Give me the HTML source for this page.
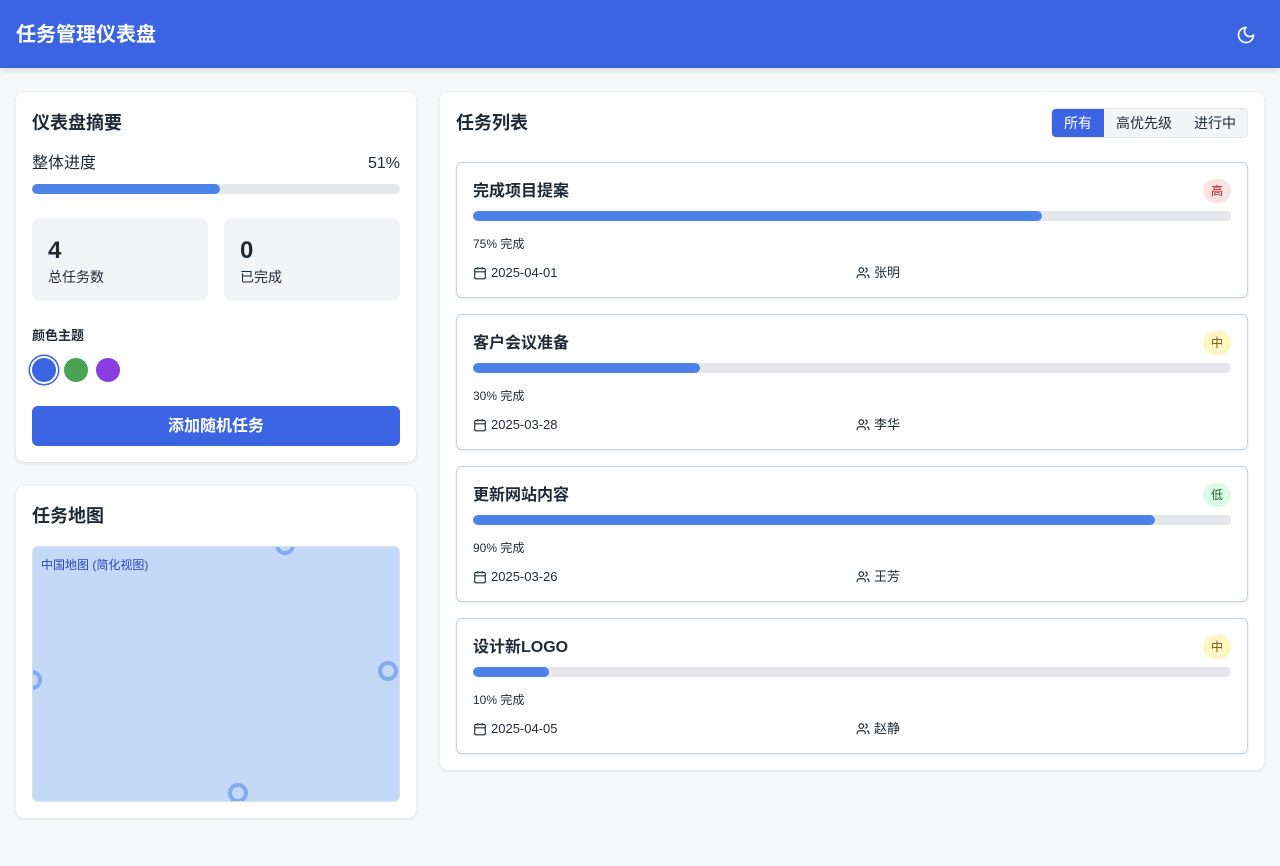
<!DOCTYPE html>
<html><head><meta charset="utf-8"><style>
*{box-sizing:border-box;margin:0;padding:0}
body{width:1280px;height:866px;background:#f8f9fb;font-family:"Liberation Sans","Noto Sans CJK SC",sans-serif;color:#1f2937;position:relative;overflow:hidden}
.hdr{position:absolute;left:0;top:0;width:1280px;height:68px;background:#3b64e2;box-shadow:0 2px 6px rgba(0,0,0,.15)}
.hdr h1{position:absolute;left:16px;top:22px;font-size:20px;color:#fff;font-weight:700;line-height:26px}
.card{position:absolute;background:#fff;border-radius:8px;box-shadow:0 1px 4px rgba(0,0,0,.12)}
.h2{position:absolute;font-size:18px;font-weight:700;line-height:24px}
.bar{position:absolute;height:10px;background:#e5e7eb;border-radius:5px;overflow:hidden}
.bar i{display:block;height:100%;background:#4c83e8;border-radius:5px}
.stat{position:absolute;top:218px;width:176px;height:83px;background:#f3f4f6;border-radius:8px}
.stat b{position:absolute;left:16px;top:19px;font-size:24px;line-height:28px}
.stat span{position:absolute;left:16px;top:49px;font-size:14px}
.dot{position:absolute;top:358px;width:24px;height:24px;border-radius:50%}
.task{position:absolute;left:16px;width:792px;height:136px;border:1px solid #c5d6ea;border-radius:6px;box-shadow:0 1px 3px rgba(0,0,0,.1);background:#fff}
.task .t{position:absolute;left:16px;top:19px;font-size:16px;font-weight:700;line-height:20px}
.task .bd{position:absolute;right:16px;top:16px;width:28px;height:24px;border-radius:12px;font-size:12px;text-align:center;line-height:24px}
.task .bar{left:16px;top:48px;width:758px}
.task .pc{position:absolute;left:16px;top:72px;font-size:12px}
.task .m{position:absolute;top:102px;font-size:13px;line-height:16px;display:flex;align-items:center;gap:4px}
.ring{position:absolute;width:20px;height:20px;border:4px solid #84aaf0;border-radius:50%}
</style></head><body>
<div class="hdr"><h1>任务管理仪表盘</h1>
<svg style="position:absolute;left:1236px;top:25px" width="20" height="20" viewBox="0 0 24 24" fill="none" stroke="#fff" stroke-width="2" stroke-linecap="round" stroke-linejoin="round"><path d="M12 3a6 6 0 0 0 9 9 9 9 0 1 1-9-9Z"/></svg></div>

<div class="card" style="left:16px;top:92px;width:400px;height:370px">
<div class="h2" style="left:16px;top:19px">仪表盘摘要</div>
<div style="position:absolute;left:16px;top:62px;font-size:16px;line-height:20px">整体进度</div>
<div style="position:absolute;right:16px;top:62px;font-size:16px;line-height:20px">51%</div>
<div class="bar" style="left:16px;top:92px;width:368px"><i style="width:51%"></i></div>
</div>
<div class="stat" style="left:32px"><b>4</b><span>总任务数</span></div>
<div class="stat" style="left:224px"><b>0</b><span>已完成</span></div>
<div style="position:absolute;left:32px;top:327px;font-size:13px;font-weight:700;line-height:18px">颜色主题</div>
<div class="dot" style="left:32px;background:#3b64e2;box-shadow:0 0 0 2px #fff,0 0 0 3.5px #3b64e2"></div>
<div class="dot" style="left:64px;background:#4aa352"></div>
<div class="dot" style="left:96px;background:#8a3de0"></div>
<div style="position:absolute;left:32px;top:406px;width:368px;height:40px;background:#3b64e2;border-radius:6px;color:#fff;font-size:16px;text-align:center;line-height:42px;font-weight:600">添加随机任务</div>

<div class="card" style="left:16px;top:486px;width:400px;height:332px">
<div class="h2" style="left:16px;top:18px">任务地图</div>
<div style="position:absolute;left:16px;top:60px;width:368px;height:256px;background:#c3d9f7;border:1px solid #d4e1f3;border-radius:6px;overflow:hidden">
<div style="position:absolute;left:8px;top:9px;font-size:12px;color:#2a47b8">中国地图 (简化视图)</div>
<div class="ring" style="left:242px;top:-12px"></div>
<div class="ring" style="left:-11px;top:123px"></div>
<div class="ring" style="left:345px;top:114px"></div>
<div class="ring" style="left:195px;top:236px"></div>
</div></div>

<div class="card" style="left:440px;top:92px;width:824px;height:678px">
<div class="h2" style="left:16px;top:19px">任务列表</div>
<div style="position:absolute;left:611px;top:16px;width:197px;height:30px;background:#f3f4f6;border:1px solid #e5e7eb;border-radius:5px;font-size:14px;line-height:28px">
<span style="position:absolute;left:0;top:0;width:52px;height:28px;background:#3b64e2;color:#fff;text-align:center;border-radius:4px 0 0 4px">所有</span>
<span style="position:absolute;left:64px">高优先级</span><span style="position:absolute;left:142px">进行中</span></div>

<div class="task" style="top:70px"><div class="t">完成项目提案</div><div class="bd" style="background:#fde2e2;color:#9b1c1c">高</div><div class="bar"><i style="width:75%"></i></div><div class="pc">75% 完成</div>
<div class="m" style="left:16px"><svg width="14" height="14" viewBox="0 0 24 24" fill="none" stroke="#1f2937" stroke-width="2"><rect x="3" y="4" width="18" height="18" rx="2"/><path d="M16 2v4M8 2v4M3 10h18"/></svg>2025-04-01</div>
<div class="m" style="left:399px"><svg width="14" height="14" viewBox="0 0 24 24" fill="none" stroke="#1f2937" stroke-width="2"><path d="M16 21v-2a4 4 0 0 0-4-4H6a4 4 0 0 0-4 4v2"/><circle cx="9" cy="7" r="4"/><path d="M22 21v-2a4 4 0 0 0-3-3.9M16 3.1a4 4 0 0 1 0 7.8"/></svg>张明</div></div>

<div class="task" style="top:222px"><div class="t">客户会议准备</div><div class="bd" style="background:#fef7c3;color:#854d0e">中</div><div class="bar"><i style="width:30%"></i></div><div class="pc">30% 完成</div>
<div class="m" style="left:16px"><svg width="14" height="14" viewBox="0 0 24 24" fill="none" stroke="#1f2937" stroke-width="2"><rect x="3" y="4" width="18" height="18" rx="2"/><path d="M16 2v4M8 2v4M3 10h18"/></svg>2025-03-28</div>
<div class="m" style="left:399px"><svg width="14" height="14" viewBox="0 0 24 24" fill="none" stroke="#1f2937" stroke-width="2"><path d="M16 21v-2a4 4 0 0 0-4-4H6a4 4 0 0 0-4 4v2"/><circle cx="9" cy="7" r="4"/><path d="M22 21v-2a4 4 0 0 0-3-3.9M16 3.1a4 4 0 0 1 0 7.8"/></svg>李华</div></div>

<div class="task" style="top:374px"><div class="t">更新网站内容</div><div class="bd" style="background:#dcfce7;color:#166534">低</div><div class="bar"><i style="width:90%"></i></div><div class="pc">90% 完成</div>
<div class="m" style="left:16px"><svg width="14" height="14" viewBox="0 0 24 24" fill="none" stroke="#1f2937" stroke-width="2"><rect x="3" y="4" width="18" height="18" rx="2"/><path d="M16 2v4M8 2v4M3 10h18"/></svg>2025-03-26</div>
<div class="m" style="left:399px"><svg width="14" height="14" viewBox="0 0 24 24" fill="none" stroke="#1f2937" stroke-width="2"><path d="M16 21v-2a4 4 0 0 0-4-4H6a4 4 0 0 0-4 4v2"/><circle cx="9" cy="7" r="4"/><path d="M22 21v-2a4 4 0 0 0-3-3.9M16 3.1a4 4 0 0 1 0 7.8"/></svg>王芳</div></div>

<div class="task" style="top:526px"><div class="t">设计新LOGO</div><div class="bd" style="background:#fef7c3;color:#854d0e">中</div><div class="bar"><i style="width:10%"></i></div><div class="pc">10% 完成</div>
<div class="m" style="left:16px"><svg width="14" height="14" viewBox="0 0 24 24" fill="none" stroke="#1f2937" stroke-width="2"><rect x="3" y="4" width="18" height="18" rx="2"/><path d="M16 2v4M8 2v4M3 10h18"/></svg>2025-04-05</div>
<div class="m" style="left:399px"><svg width="14" height="14" viewBox="0 0 24 24" fill="none" stroke="#1f2937" stroke-width="2"><path d="M16 21v-2a4 4 0 0 0-4-4H6a4 4 0 0 0-4 4v2"/><circle cx="9" cy="7" r="4"/><path d="M22 21v-2a4 4 0 0 0-3-3.9M16 3.1a4 4 0 0 1 0 7.8"/></svg>赵静</div></div>
</div>
</body></html>
